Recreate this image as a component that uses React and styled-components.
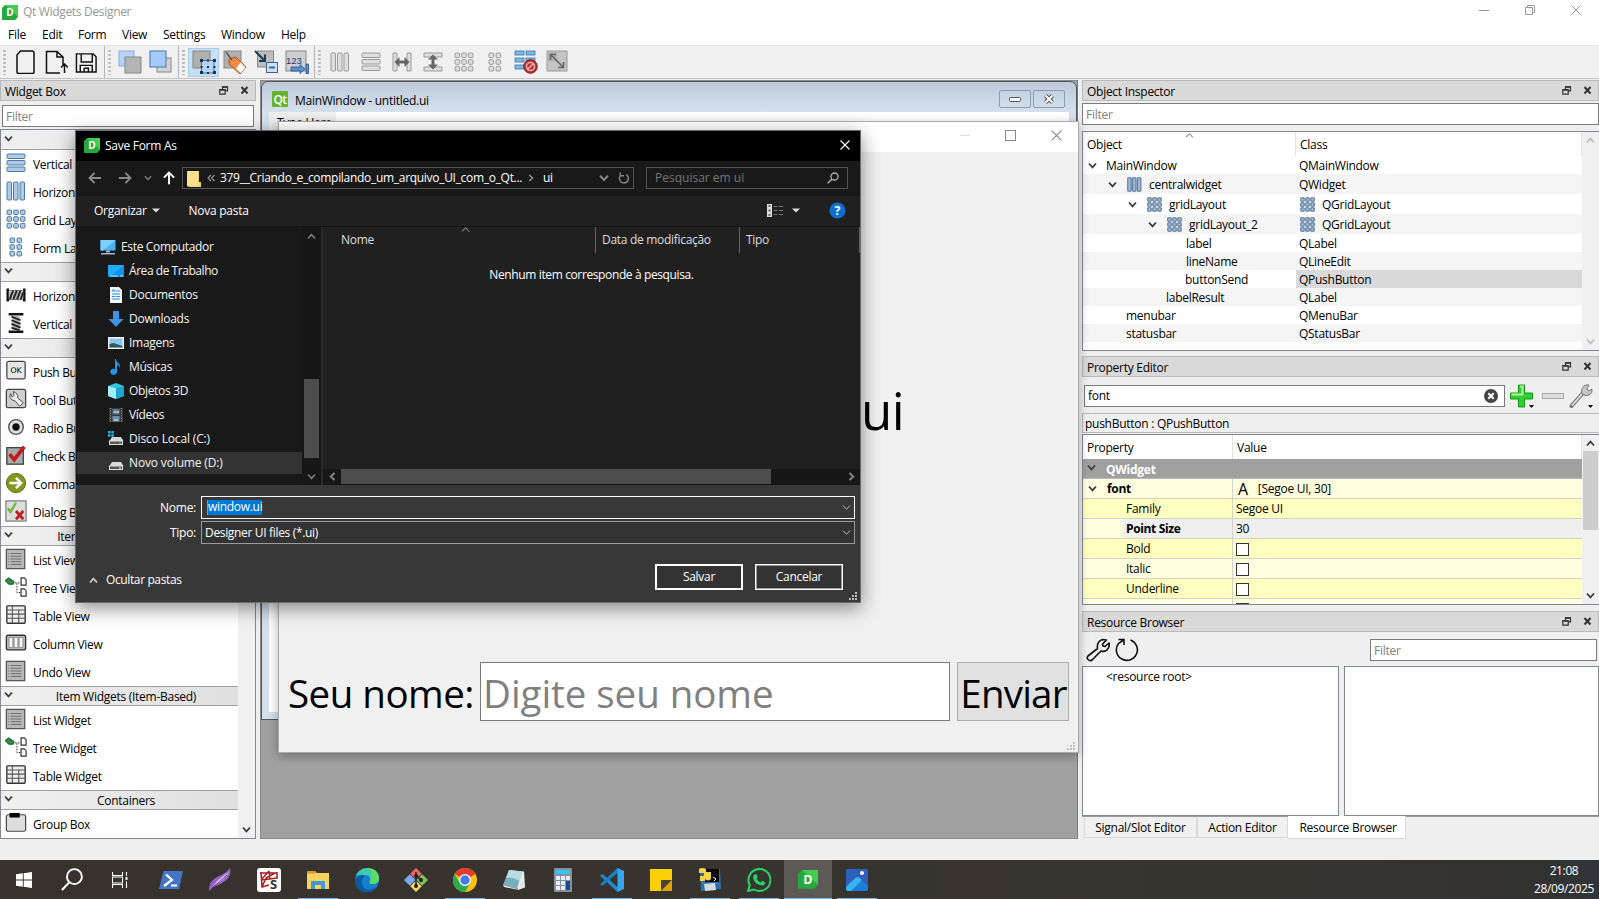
import React from 'react';
import styled, { createGlobalStyle, css } from 'styled-components';

const Global = createGlobalStyle`
  * { box-sizing: border-box; }
  html, body { margin: 0; padding: 0; overflow: hidden; }
  body { font-family: "Open Sans", "Noto Sans", sans-serif; font-size: 12px; letter-spacing: -0.27px; color: #000; }
  svg { display: block; flex: none; }
`;

/* ---------- shell ---------- */
const Screen = styled.div`
  position: relative; width: 1599px; height: 899px; overflow: hidden;
  display: flex; flex-direction: column; background: #efeff0; white-space: nowrap;
`;
const TitleBar = styled.div`
  display: flex; align-items: center; height: 24px; flex: none; background: #fff; padding-left: 2px; color: #969696;
`;
const TitleText = styled.span`flex: 1; margin-left: 5px; padding-bottom: 1px; letter-spacing: -0.32px;`;
const CaptionButton = styled.div`
  width: 46px; height: 24px; display: flex; justify-content: center; padding: 5px 1px 0 0;
`;
const MenuBar = styled.div`
  display: flex; align-items: center; height: 21px; flex: none; background: #fff; padding-left: 8px;
`;
const MenuItem = styled.span`width: ${p => p.$w}px;`;
const ToolBar = styled.div`
  display: flex; height: 34px; flex: none; border-top: 1px solid #e2e2e2; border-bottom: 1px solid #c3c3c3; background: #f0f0f0;
`;
const ToolGroup = styled.div`
  display: flex; align-items: center; padding-right: 2px; border-right: ${p => (p.$last ? 'none' : '1px solid #b5b5b5')};
`;
const Grip = styled.div`
  width: 9px; height: 26px; flex: none;
  background: radial-gradient(circle at 4.5px 2px, #b4b4b4 1px, transparent 1.4px) 0 0 / 9px 4px;
`;
const ToolButton = styled.div`
  width: 31px; height: 29px; display: flex; align-items: center; justify-content: center;
  ${p => p.$on && css`background: #c5dff3; border: 1px solid #a5cdea;`}
`;
const Work = styled.div`display: flex; height: 760px; flex: none;`;
const Status = styled.div`flex: 1;`;

/* ---------- docks ---------- */
const LeftDock = styled.div`width: 256px; padding-top: 1px; display: flex; flex-direction: column; flex: none;`;
const RightDock = styled.div`flex: 1; padding-top: 1px; display: flex; flex-direction: column;`;
const DockTitle = styled.div`
  height: 21px; flex: none; display: flex; align-items: center; padding: 1px 6px 0 4px; margin-top: ${p => p.$mt || 0}px;
  border: 1px solid #b9b9b9; background: #d9d9d9;
  span { flex: 1; padding-top: 1px; }
`;
const Field = styled.div`
  height: 22px; flex: none; background: #fff; border: 1px solid #7a7a7a; padding: 0 3px; display: flex; align-items: center;
  color: ${p => (p.$value ? '#000' : '#7f7f7f')}; margin: ${p => p.$m || 0}; width: ${p => p.$w || 'auto'};
`;
const BoxFrame = styled.div`
  margin-top: 2px; height: 710px; border: 1px solid #828790; display: flex; background: #fff;
`;
const BoxList = styled.div`width: 237px; display: flex; flex-direction: column;`;
const Category = styled.div`
  height: 20px; flex: none; display: flex; align-items: center; padding-left: 3px;
  border-top: 1px solid ${p => (p.$first ? '#f0f0f0' : '#a0a0a0')}; border-bottom: 1px solid #a0a0a0;
  background: linear-gradient(90deg, #f0f0f0, #dfdfdf);
  span { flex: 1; text-align: center; padding: 1px 0 0 1px; }
  svg { margin-bottom: 3px; }
`;
const WidgetRow = styled.div`
  height: 28px; flex: none; display: flex; align-items: center; padding-left: 4px;
  span { margin-left: 6px; letter-spacing: -0.32px; }
`;
const VScroll = styled.div`
  width: 17px; background: #f0f0f0; display: flex; flex-direction: column; align-items: center; padding: 4px 0; flex: none;
`;
const Thumb = styled.div`width: 15px; height: ${p => p.$h}px; background: #cdcdcd; margin-top: 3px;`;
const Spacer = styled.div`flex: 1;`;

/* ---------- MDI area ---------- */
const Mdi = styled.div`width: 818px; margin: 1px 4px 0 4px; background: #a0a0a0; position: relative; border: 1px solid #8b8b8b; border-right-color: #777; flex: none;`;
const SubWindow = styled.div`
  position: absolute; left: 0; top: 0; width: 816px; height: 639px; border: 1px solid #51565e; border-radius: 7px 7px 0 0;
  background: linear-gradient(#bccad9, #d5e0ec 30px, #d3dfec); padding: 0 7px 7px 7px; display: flex; flex-direction: column;
`;
const SubTitle = styled.div`
  height: 30px; flex: none; display: flex; align-items: flex-start; padding: 9px 4px 0 3px;
  span { flex: 1; margin-left: 7px; padding-top: 1px; }
`;
const SubButton = styled.div`
  width: 32px; height: 18px; margin: -1px 0 0 2px; border: 1px solid #8a9bb4; border-radius: 2px; display: flex; align-items: center; justify-content: center;
`;
const SubBody = styled.div`flex: 1; background: #fff; div { width: 67px; background: #efefef; padding: 0 8px; line-height: 21px; height: 19px; }`;
const Preview = styled.div`
  position: absolute; left: 278px; top: 121px; width: 801px; height: 632px; background: #f0f0f0;
  border: 1px solid #aaa; box-shadow: 0 3px 10px rgba(0,0,0,.3); display: flex; flex-direction: column;
`;
const PreviewTitle = styled.div`
  height: 30px; flex: none; background: #fff; display: flex; justify-content: flex-end; padding: 8px 16px 0 10px; gap: 35px;
`;
const PreviewBody = styled.div`flex: 1; display: flex; flex-direction: column; padding: 0 9px;`;
const ResultLabel = styled.div`height: 510px; flex: none; display: flex; align-items: center; font-size: 51px; letter-spacing: -0.6px; padding: 6px 0 0 573px;`;
const FormRow = styled.div`
  height: 59px; flex: none; display: flex; font-size: 38.5px; letter-spacing: -0.5px; line-height: 62px;
`;
const NameLabel = styled.div`width: 192px;`;
const NameInput = styled.div`width: 470px; border: 1px solid #7a7a7a; background: #fff; color: #808080; padding-left: 2px; margin-right: 7px; line-height: 60px; letter-spacing: -0.05px;`;
const SendButton = styled.div`width: 112px; border: 1px solid #adadad; background: #e1e1e1; text-align: center; line-height: 60px; overflow: hidden; letter-spacing: -0.8px; padding-left: 1px;`;
const Corner = styled.div`display: flex; justify-content: flex-end; margin: auto -6px 2px 0;`;

/* ---------- tables ---------- */
const TreeFrame = styled.div`
  height: ${p => p.$h}px; flex: none; margin-top: ${p => p.$mt}px; border: 1px solid #828790; border-right: none; background: #fff; display: flex; overflow: hidden;
`;
const TreeMain = styled.div`width: 499px; display: flex; flex-direction: column;`;
const TreeHead = styled.div`height: 24px; flex: none; display: flex; position: relative;`;
const TreeHeadCell = styled.div`
  width: ${p => p.$w}px; display: flex; align-items: center; padding: 1px 0 0 4px; border-right: 1px solid #e2e2e2;
`;
const SortMark = styled.i`position: absolute; left: 102px; top: -1px;`;
const TreeRow = styled.div`
  height: ${p => p.$h}px; flex: none; display: flex; background: ${p => (p.$alt ? '#f5f5f5' : '#fff')};
`;
const TreeName = styled.div`
  width: 213px; flex: none; display: flex; align-items: center; padding-left: ${p => p.$in}px;
  span { margin-left: ${p => p.$gap}px; }
  svg + svg { margin-left: 10px; }
`;
const TreeClass = styled.div`
  flex: 1; display: flex; align-items: center; padding-left: 3px; background: ${p => (p.$sel ? '#d9d9d9' : 'transparent')};
  svg { margin: 0 7px 0 1px; }
`;
const PropRow = styled.div`
  height: 20px; flex: none; display: flex; border-bottom: 1px solid #d2d2c8; background: ${p => p.$bg};
`;
const PropName = styled.div`
  width: 150px; flex: none; border-right: 1px solid #d2d2c8; display: flex; align-items: center; padding-left: ${p => p.$in}px;
  font-weight: ${p => (p.$bold ? 700 : 400)}; letter-spacing: ${p => (p.$bold ? '-0.35px' : 'inherit')};
  background: ${p => (p.$sel ? 'linear-gradient(90deg, #ffffdf 40px, transparent 40px)' : 'transparent')};
  svg { margin-right: 10px; }
`;
const PropValue = styled.div`
  flex: 1; display: flex; align-items: center; padding-left: 3px;
  b { font: 16px/16px "Open Sans"; margin: 0 10px 0 2px; }
`;
const GroupRow = styled.div`
  height: 20px; flex: none; background: #a0a0a0; color: #fff; font-weight: 700; display: flex; align-items: center; padding: 1px 0 0 4px; border-bottom: 1px solid #bbb;
  svg { margin: 0 10px 3px 0; }
`;
const CheckBox = styled.div`width: 13px; height: 13px; border: 1px solid #333; background: #fff; margin-top: 1px;`;
const PropTools = styled.div`height: 36px; flex: none; display: flex; align-items: center; padding: 1px 6px 0 2px; justify-content: space-between;`;
const ObjectLine = styled.div`height: 20px; flex: none; border: 1px solid #b9b9b9; border-right: none; display: flex; align-items: center; padding: 1px 0 0 2px;`;
const ResTools = styled.div`height: 34px; flex: none; display: flex; align-items: center; padding: 2px 2px 0 4px; gap: 5px;`;
const ResPanes = styled.div`height: 150px; flex: none; display: flex; gap: 5px;`;
const ResPane = styled.div`flex: ${p => (p.$w ? 'none' : 1)}; width: ${p => p.$w || 'auto'}; border: 1px solid #828790; background: #fff; padding: 1px 0 0 23px;`;
const Tabs = styled.div`display: flex; padding-left: 2px; height: 23px; flex: none; border-top: 1px solid #9a9aa0;`;
const Tab = styled.div`
  width: ${p => p.$w}px; height: ${p => (p.$on ? 23 : 21)}px; display: flex; align-items: center; justify-content: center; padding-left: ${p => (p.$on ? 3 : 0)}px;
  background: ${p => (p.$on ? '#fff' : '#f0f0f0')}; border: 1px solid #d9d9d9; border-top: none; border-left-width: ${p => (p.$on ? 0 : 1)}px; margin-top: ${p => (p.$on ? -1 : 0)}px;
`;

/* ---------- save dialog ---------- */
const Dialog = styled.div`
  position: absolute; left: 75px; top: 130px; width: 786px; height: 473px; border: 1px solid #6a6a6a; background: #383838; color: #fff;
  display: flex; flex-direction: column; box-shadow: 0 5px 18px rgba(0,0,0,.45);
`;
const DlgTitle = styled.div`height: 30px; flex: none; background: #000; display: flex; align-items: center; padding: 0 10px 2px 8px; span { flex: 1; margin-left: 5px; }`;
const DlgNav = styled.div`height: 35px; flex: none; background: #191919; display: flex; align-items: center; padding: 0 0 1px 12px;`;
const NavIcon = styled.div`width: ${p => p.$w}px; flex: none; display: flex;`;
const Address = styled.div`
  width: 452px; height: 22px; border: 1px solid #535353; display: flex; align-items: center; padding-left: 4px; flex: none;
`;
const Crumb = styled.span`width: ${p => p.$w}px; color: ${p => (p.$dim ? '#9a9a9a' : '#fff')}; letter-spacing: ${p => p.$ls || 'inherit'}; flex: none; padding-bottom: 1px;`;
const Search = styled.div`
  width: 202px; height: 22px; margin-left: 12px; border: 1px solid #535353; display: flex; align-items: center; justify-content: space-between; padding: 0 8px 1px; color: #757575; letter-spacing: 0;
`;
const DlgTools = styled.div`
  height: 31px; flex: none; background: #202020; border-bottom: 1px solid #141414; display: flex; align-items: center; padding: 0 14px 1px 18px;
`;
const MenuMark = styled.i`margin: 0 ${p => p.$r}px 0 ${p => p.$l}px;`;
const DlgBody = styled.div`height: 258px; flex: none; display: flex;`;
const NavPane = styled.div`width: 226px; background: #191919; padding-top: 8px;`;
const NavRow = styled.div`
  height: 24px; display: flex; align-items: center; padding-left: ${p => (p.$root ? 24 : 32)}px; color: #f4f4f4;
  background: ${p => (p.$sel ? 'linear-gradient(#333, #333) 1px 1px / 100% 22px no-repeat' : 'none')};
  letter-spacing: ${p => p.$ls || -0.27}px;
  span { margin-left: 5px; padding-bottom: 2px; }
`;
const NavScroll = styled.div`
  width: 19px; background: #171717; display: flex; flex-direction: column; align-items: center; padding: 5px 0 4px;
  i { width: 15px; height: 79px; background: #4d4d4d; margin: auto 0 14px; }
`;
const Files = styled.div`flex: 1; background: #202020; border-left: 2px solid #2b2b2b; display: flex; flex-direction: column;`;
const FileHead = styled.div`
  height: 26px; flex: none; display: flex; position: relative; color: #dedede;
  svg { position: absolute; left: 138px; top: -2px; }
`;
const HeadCell = styled.div`width: ${p => p.$w}px; border-right: 1px solid #636363; padding: 4px 0 0 ${p => p.$l}px; letter-spacing: -0.3px;`;
const Empty = styled.div`flex: 1; text-align: center; padding-top: 13px; letter-spacing: -0.38px;`;
const HScroll = styled.div`
  height: 16px; background: #171717; display: flex; align-items: center; padding: 0 4px 1px 5px;
  i { width: 430px; height: 15px; background: #4d4d4d; margin: 0 auto 0 4px; }
`;
const DlgForm = styled.div`padding: 11px 5px 0 0; display: flex; flex-direction: column; gap: 2px;`;
const FormLine = styled.div`display: flex; align-items: center; height: 23px; label { width: 120px; text-align: right; margin-right: 5px; }`;
const Combo = styled.div`
  flex: 1; height: 23px; display: flex; align-items: center; justify-content: space-between; background: ${p => (p.$focus ? '#383838' : '#333')};
  border: 1px solid ${p => (p.$focus ? '#fff' : '#9b9b9b')}; padding: 0 3px ${p => (p.$focus ? 1 : 0)}px ${p => (p.$focus ? 5 : 3)}px; letter-spacing: -0.33px;
`;
const Selected = styled.span`background: #0078d7; border-left: 1px solid #e08030; line-height: 14px; height: 15px; letter-spacing: -0.3px;`;
const DlgFoot = styled.div`
  display: flex; align-items: center; height: 26px; margin-top: 20px; padding: 0 17px 0 13px;
  span { flex: 1; margin-left: 8px; padding-top: 4px; letter-spacing: -0.38px; }
  > svg { margin-top: 6px; }
`;
const DlgButton = styled.div`
  width: 88px; height: 26px; margin-left: 12px; border: ${p => (p.$main ? '2px solid #fff' : '1px solid #fff')};
  box-shadow: ${p => (p.$main ? 'none' : 'inset 0 0 0 1px #9b9b9b')}; background: #333; display: flex; align-items: center; justify-content: center; padding-bottom: 2px;
`;
const DlgCorner = styled.div`display: flex; justify-content: flex-end; padding: 2px 3px 0 0;`;

/* ---------- taskbar ---------- */
const TaskBar = styled.div`height: 39px; flex: none; display: flex; background: linear-gradient(90deg, #37322d, #38342f 70%, #32322f 96%, #30343a);`;
const Task = styled.div`
  width: ${p => p.$w || 49}px; height: 39px; display: flex; align-items: center; justify-content: center; position: relative; flex: none; padding-right: ${p => p.$pr || 0}px;
  background: ${p => (p.$active ? 'linear-gradient(90deg, #5d5955, #5d5955) 1px 0 / 48px 39px no-repeat' : 'none')};
  ${p => (p.$run || p.$active) && css`&::after { content: ''; position: absolute; left: ${p.$active ? 1 : 5}px; right: ${p.$active ? 0 : 4}px; bottom: 0; height: 1px; background: #76b9ed; }`}
`;
const Clock = styled.div`margin-left: auto; width: 70px; color: #fff; text-align: center; line-height: 18px; padding-top: 2px; letter-spacing: -0.38px;`;

/* ---------- icons ---------- */
const Designer = ({ s = 16 }) => (
  <svg width={s} height={s * 15 / 16} viewBox="0 0 16 15">
    <path d="M3 0H16V12L13 15H0V3Z" fill="#27a83c" /><path d="M3 0H16V12L9 5Z" fill="#41cd52" />
    <text x="8" y="11.3" textAnchor="middle" fontSize="10" fontWeight="700" letterSpacing="0" fill="#fff" fontFamily="Open Sans">D</text>
  </svg>
);
const QtIcon = () => (
  <svg width="16" height="16" viewBox="0 0 16 16"><rect width="16" height="16" rx="1" fill="#65b32e" />
    <text x="8" y="12.5" textAnchor="middle" fontSize="12" fontWeight="600" letterSpacing="-.5" fill="#fff" fontFamily="Open Sans">Qt</text></svg>
);
const X = ({ s = 10, c = '#999', w = 1 }) => <svg width={s} height={s} viewBox="0 0 10 10"><path d="M.5.5l9 9M9.5.5l-9 9" stroke={c} strokeWidth={w} fill="none" /></svg>;
const Chev = ({ d = 'down', c = '#3c3c3c', s = 9, w = 1.8 }) => {
  const r = { down: 0, left: 90, up: 180, right: 270 }[d];
  return <svg width={s} height={s} viewBox="0 0 9 9"><path d="M1 2.5l3.5 3.8L8 2.5" transform={`rotate(${r} 4.5 4.5)`} stroke={c} strokeWidth={w} fill="none" /></svg>;
};
const Tri = ({ c = '#ddd' }) => <svg width="8" height="5" viewBox="0 0 8 5"><path d="M0 .5h8L4 4.5z" fill={c} /></svg>;
const DockIcons = () => (
  <svg width="30" height="10" viewBox="0 0 30 10"><path d="M3.5 3V.8h5v4H6.5M.8 3.8h5.4v4.4H.8z" stroke="#333" fill="none" strokeWidth="1.2" /><path d="M.5 3.8h6M3 .9h6" stroke="#333" strokeWidth="1.5" /><path d="M22.500 1l6 6.5M28.500 1l-6 6.5" stroke="#333" strokeWidth="2" /></svg>
);
const SizeGrip = ({ c }) => <svg width="8" height="8" viewBox="0 0 8 8" fill={c}><path d="M6 0h2v2H6zM3 3h2v2H3zM6 3h2v2H6zM0 6h2v2H0zM3 6h2v2H3zM6 6h2v2H6z" /></svg>;

const cells = (xs, ys, w, h, k) => xs.flatMap(x => ys.map(y => <rect key={`${k}${x}-${y}`} x={x} y={y} width={w} height={h} rx="1" />));
const LayoutIcon = ({ kind, gray, s = 20, dim }) => (
  <svg width={s} height={s} viewBox="0 0 20 20" fill={gray ? '#dedede' : dim ? '#a3bdd8' : '#a9cdea'} stroke={gray ? '#9a9a9a' : dim ? '#5a7899' : '#56789c'} strokeWidth={dim ? 1.5 : 1}>
    {kind === 'v' && cells([1], [1, 7.5, 14], 18, 4.5, 'v')}
    {kind === 'h' && cells([1, 7.5, 14], [1], 4.5, 18, 'h')}
    {kind === 'g' && cells([1, 7.7, 14.4], [1, 7.7, 14.4], 4.6, 4.6, 'g')}
    {kind === 'f' && cells([4, 11], [1, 7.7, 14.4], 4.6, 4.6, 'f')}
  </svg>
);
const SplitIcon = ({ v }) => (
  <svg width="20" height="20" viewBox="0 0 20 20"><g transform={v ? 'rotate(90 10 10)' : ''}>
    <path d="M1 1h4v18H1zM15 1h4v18h-4z" fill="#dedede" stroke="#9a9a9a" /><path d="M2.500 10L7.500 5v3.500h5V5l5 5-5 5v-3.500h-5V15z" fill="#666" /></g></svg>
);
const Sq = ({ x, y, s = 16, c = '#b5b5b5', b = '#888' }) => <rect x={x} y={y} width={s} height={s} fill={c} stroke={b} />;
const Svg = ({ s = 24, children }) => <svg width={s} height={s} viewBox="0 0 24 24" fill="none">{children}</svg>;

const I = {
  new: <Svg><path d="M7.500 1H19q2 0 2 2v19q0 1.500-1.500 1.500h-14Q4 23.500 4 22V5z" stroke="#111" strokeWidth="1.500" /></Svg>,
  open: <Svg><path d="M16 23H2.500V1.500H13L19 7v8M13 1.500V7h5.500M20.500 23v-9M17 17.500l3.500-3.500 3.500 3.500" stroke="#111" strokeWidth="1.500" /></Svg>,
  save: <Svg s={23}><path d="M1.500 3h17.500l3 3v16H1.500zM6.500 3v8.500h11.500V3M5.500 22v-7H18v7M9.500 18h4.500v4M9.500 18v4" stroke="#111" strokeWidth="1.500" /></Svg>,
  back: <Svg><rect x="1" y="1" width="15" height="15" fill="#b8d2f5" stroke="#8ea9cf" /><Sq x="7" y="7" c="#b4b4b4" /></Svg>,
  front: <Svg><Sq x="8" y="8" s={14} c="#d3d3d3" /><rect x="1" y="1" width="16" height="16" fill="#a5cbfa" stroke="#4d6fa3" /></Svg>,
  edit: <Svg><Sq x="1" y="1" s={17} c="#b0b0b0" /><rect x="9.500" y="10.500" width="12.500" height="12.500" fill="#b5d3f8" stroke="#2f4f7d" strokeWidth=".8" /><path d="M8 9h3v3H8zM21 9h3v3h-3zM8 21h3v3H8zM21 21h3v3h-3zM15 9.500h2v2h-2zM8.500 16h2v2h-2zM21.500 16h2v2h-2zM15 22h2v2h-2zM15 16h2v2h-2z" fill="#1f3350" /></Svg>,
  tag: <Svg><Sq x="1" y="1" s={17} c="#b0b0b0" /><path d="M6 9l7-2 10 10-6 7L6 14z" fill="#ef8a42" stroke="#b5561d" /><path d="M17.500 12.500l5 5-5 5.500-4.500-4.500z" fill="#fff" /><path d="M3 2l6 8" stroke="#555" strokeWidth="1.300" /></Svg>,
  buddy: <Svg><Sq x="3.500" y="1" s={16} c="#bcbcbc" /><rect x="12.500" y="12.500" width="11" height="10" fill="#cfe2fb" stroke="#3e6196" /><path d="M15 17.500h6" stroke="#3e6196" strokeWidth="2" /><path d="M1 1l9 9M11 4.500V11H5" stroke="#1b3c55" strokeWidth="2" /></Svg>,
  taborder: <Svg><Sq x="1" y="1" s={20} c="#cfcfcf" /><text x="1" y="14" fontSize="9.500" fontFamily="Liberation Sans" fill="#123a78" letterSpacing="0">123</text><path d="M6 17h9v-2.500l5 4.500-5 4.500V21H6zM21 14h2.500v10H21z" fill="#5d8fd0" stroke="#234f8f" strokeWidth=".8" /></Svg>,
  breakl: <Svg><g fill="#79b7e6" stroke="#3f77a8" strokeWidth=".8"><rect x="1" y="1" width="9" height="4" /><rect x="12" y="1" width="9" height="4" /><rect x="1" y="8" width="9" height="4" /><rect x="12" y="8" width="9" height="4" /><rect x="1" y="15" width="9" height="4" /></g><circle cx="16.500" cy="16.500" r="6.800" fill="#c02b2b" stroke="#8b1c1c" /><path d="M12.500 16.500a4 4 0 018 0a4 4 0 01-8 0M19.500 13.500l-6 6" stroke="#ddb0b0" strokeWidth="1.600" /></Svg>,
  adjust: <Svg><Sq x="2" y="1" s={20} c="#c4c4c4" b="#999" /><rect x="2.500" y="1.500" width="10" height="10" fill="#b4b4b4" /><path d="M6 5l12 12M5.500 10V4.500H11M18.500 12v5.500H13" stroke="#666" strokeWidth="1.700" /></Svg>,
  spacerH: <Svg s={22}><path d="M3 5v14M21 5v14" stroke="#111" strokeWidth="2.800" /><path d="M4 8h16v8H4z" fill="#b5b5b5" /><path d="M5 17l4-10M9 17l4-10M13 17l4-10M17 17l3-8" stroke="#222" strokeWidth="2" /><path d="M5 7h14M5 17h14" stroke="#555" /></Svg>,
  spacerV: <Svg s={22}><path d="M4 2.500h16M4 21.500h16" stroke="#111" strokeWidth="2.800" /><path d="M8 4h8v16H8z" fill="#b5b5b5" /><path d="M7 5l10 4M7 9l10 4M7 13l10 4M7 17l9 3" stroke="#222" strokeWidth="2" /></Svg>,
  push: <Svg s={22}><rect x="2" y="1.500" width="20" height="19" rx="2" fill="#e7e7e7" stroke="#444" strokeWidth="1.400" /><text x="12" y="14" fontSize="8.500" textAnchor="middle" letterSpacing="0" fontFamily="DejaVu Sans" fill="#000">OK</text></Svg>,
  tool: <Svg s={22}><rect x="1.500" y="1.500" width="21" height="20" rx="2" fill="#cfcfcf" stroke="#444" strokeWidth="1.400" /><path d="M6 6q-2 5 2 7l3 1 5 6 4-4-6-5q0-6-5-7l1 4-2 2z" fill="#eee" stroke="#444" /></Svg>,
  radio: <Svg s={22}><circle cx="12" cy="12" r="8" fill="#ddd" stroke="#555" strokeWidth="1.500" /><circle cx="12" cy="12" r="4" fill="#111" /></Svg>,
  check: <Svg s={22}><rect x="2" y="4" width="18" height="18" fill="#aaa" stroke="#444" strokeWidth="1.500" /><path d="M5 11l5 6L21 3" stroke="#c01c1c" strokeWidth="4" /></Svg>,
  command: <Svg s={22}><circle cx="12" cy="12" r="10.500" fill="#7f9a1e" stroke="#54690c" /><path d="M5 12h12M12 6.500l5.500 5.500-5.500 5.500" stroke="#fff" strokeWidth="2.800" /></Svg>,
  dialogbox: <Svg s={22}><rect x="1" y="1" width="22" height="22" fill="#ddd" stroke="#555" /><path d="M3 9l3 4 6-10" stroke="#6fba32" strokeWidth="2.600" /><path d="M12 12l8 9M20 12l-8 9" stroke="#bf2020" strokeWidth="3" /></Svg>,
  list: <Svg s={22}><rect x="1.500" y="1.500" width="20" height="21" fill="#b9b9b9" stroke="#555" strokeWidth="1.400" /><path d="M6 6h12M6 9h12M6 12h12M6 15h12M6 18h12M3.500 6h1M3.500 9h1M3.500 12h1M3.500 15h1M3.500 18h1" stroke="#666" /></Svg>,
  tree: <Svg s={22}><path d="M0 5l4-3 6 4-1 3-5 0z" fill="#2f8f46" stroke="#174d24" /><path d="M11 7.500h5M13 8v10h4" stroke="#111" strokeDasharray="1.500 1.500" /><path d="M17.500 2H21l2 2v6h-5.500zM17.500 14H21l2 2v6h-5.500z" fill="#fff" stroke="#333" strokeWidth="1.300" /></Svg>,
  table: <Svg s={22}><rect x="2" y="2" width="20" height="19" rx="1" fill="#eee" stroke="#333" strokeWidth="1.500" /><path d="M2 6.500h20M2 11h20M2 15.500h20M8 2v19M15 6v15" stroke="#555" strokeWidth="1.200" /></Svg>,
  column: <Svg s={22}><rect x="1.500" y="3.500" width="21" height="16" rx="2" fill="#bbb" stroke="#333" strokeWidth="1.500" /><path d="M4.500 6h4v11h-4zM10 6h4v11h-4zM15.500 6h4v11h-4z" fill="#fff" stroke="#777" strokeWidth=".8" /></Svg>,
  group: <Svg s={22}><rect x="1.500" y="3" width="21" height="18" rx="2" fill="#ddd" stroke="#444" strokeWidth="1.300" /><rect x="5" y="1" width="11" height="5" fill="#000" /></Svg>,
};

const N = ({ children, s = 16 }) => <svg width={s} height={s} viewBox="0 0 16 16" fill="none">{children}</svg>;
const NavI = {
  pc: <N><rect x=".5" y="1" width="15" height="10.500" fill="#4db3f4" /><path d="M.5 1h15L3 11.500H.500z" fill="#7bd0fb" /><path d="M6 11.500h4v2H6zM1 14h14v1.500H1z" fill="#9fb6c6" /></N>,
  desk: <N><rect x="0" y="2" width="16" height="12" fill="#0c93f0" /><path d="M0 2h16L4 12H0z" fill="#22a9ff" /><path d="M2 13h8M12 13h3" stroke="#bfe6ff" /></N>,
  doc: <N><path d="M2 0h9l3 3v13H2z" fill="#f2f5f7" /><path d="M4 5l1.500-3L7 5M8 4h4M4 7h8M4 9.500h3M8 9.500h4M4 12h8" stroke="#2f8fd0" /></N>,
  down: <N><path d="M5 0h6v8h4.500L8 16 .5 8H5z" fill="#3d93e2" /></N>,
  img: <N><rect y="2" width="16" height="12" fill="#f1f4f6" /><rect x="1.500" y="3.500" width="13" height="9" fill="#8cc6ec" /><path d="M1.500 9l4-1 9 3v1.500h-13z" fill="#2e5a5c" /></N>,
  music: <N><path d="M8 0c0 4 5 4 4 9-.6-2-2-3-3-3v7a3.400 3 0 11-2-3V0z" fill="#1c96ef" /></N>,
  cube: <N><path d="M8 0l8 3v10l-8 3-8-3V3z" fill="#35c4de" /><path d="M0 3l8 2.500V16l-8-3z" fill="#a2edf4" /><path d="M16 3L8 5.500V16l8-3z" fill="#1ba5cf" /></N>,
  video: <N><rect x="1" y="1" width="14" height="14" fill="#3a3a3a" /><path d="M2.500 1v14M13.500 1v14" stroke="#999" strokeDasharray="1 1.500" /><rect x="4.500" y="2" width="7" height="5.500" fill="#3b78c9" /><rect x="4.500" y="9" width="7" height="5.500" fill="#5f93c9" /><path d="M5 6l2-3 2 3zM8 4h3v2H8zM6 12h4v2H6z" fill="#e0b84a" /></N>,
  diskc: <N><path d="M0 0h2.500v2.500H0zM3.300 0h2.500v2.500H3.300zM0 3.300h2.500v2.500H0zM3.300 3.300h2.500v2.500H3.300z" fill="#1fb2e8" /><path d="M4 6h9l2.500 4H1.500z" fill="#d8d8d8" /><rect x="1.500" y="10" width="13" height="3.500" fill="#555" stroke="#ddd" /><path d="M11 12h2" stroke="#3fdc4f" /></N>,
  diskd: <N><path d="M4 7h9l2.500 4H1.500z" fill="#d8d8d8" /><rect x="1.500" y="11" width="13" height="3.500" fill="#555" stroke="#ddd" /><path d="M11 13h2" stroke="#eee" /></N>,
};
const Arrow = ({ d, c }) => <N s={14}><path transform={d === 'right' ? 'rotate(180 8 8)' : d === 'up' ? 'rotate(90 8 8)' : ''} d="M15 8H2M7.500 2.200L1.800 8l5.700 5.800" stroke={c} strokeWidth="2.200" /></N>;

const T = {
  win: <N><path d="M0 2.300L6.800 1.300V7.600H0zM7.700 1.200L16 0V7.600H7.700zM0 8.500H6.800V14.700L0 13.700zM7.700 8.500H16V16L7.700 14.800z" fill="#fff" /></N>,
  search: <Svg s={23}><circle cx="14" cy="9" r="7.800" stroke="#fff" strokeWidth="2" /><path d="M8.500 15L1 23" stroke="#fff" strokeWidth="2.200" /></Svg>,
  view: <N><path d="M.5 0v3.500h10V0M.5 16v-3.500h10V16M.5 5h10v6H.500zM14.500 0v4M14.500 9.500V16" stroke="#fff" strokeWidth="1.100" /><path d="M13.500 5h2v3h-2z" fill="#fff" /></N>,
  ps: <Svg><path d="M4.500 3H24l-4 18H0z" fill="#4275c4" /><path d="M7 6.500l6 5.500-8 6M12 17.500h6" stroke="#fff" strokeWidth="2.200" /></Svg>,
  feather: <Svg><path d="M1 23Q0 14 9 9 17 6 22 0q2 8-5 13-7 5-12 6z" fill="#9461c4" /><path d="M2 22Q8 12 21 4q-4 9-15 13z" fill="#d9bdf0" /><path d="M1 23L19 7" stroke="#6d3ca0" /></Svg>,
  spyder: <Svg><rect width="24" height="24" rx="3" fill="#fff" /><path d="M3 5h17M4 4l1 15 7-2M12 3l-8 9M12 3l1 8 7-1V4M5 19l4-9 9-5M4 12l9-1" stroke="#a61e22" strokeWidth="1.500" /><text x="13" y="21" fontSize="13" fontWeight="700" letterSpacing="0" fontFamily="Open Sans" fill="#333">S</text></Svg>,
  folder: <Svg><path d="M1 3h8l2 2h12v16H1z" fill="#fbd25f" /><path d="M1 3h8l1.500 2.500H1z" fill="#dd9b1d" /><path d="M5 21v-8h14v8h-4v-4H9v4z" fill="#3d9bdc" /></Svg>,
  edge: <Svg><circle cx="12" cy="12" r="12" fill="#1680cf" /><path d="M1 8Q4 0 12 0q11 0 12 10 0 6-7 6-4 0-2-3 1-6-5-6-6-1-9 1z" fill="#3cc9b0" /><path d="M12 0q11 0 12 10 0 6-7 6-3 0-2-3Q20 6 12 0z" fill="#5ddb66" /><path d="M10 8q-6 5-1 12 5 4 12-1-4 6-11 5Q0 22 0 12q3-6 10-4z" fill="#0c59a4" /></Svg>,
  git: <Svg><path d="M12 0l5.700 5.700L12 11.400 6.300 5.700z" fill="#f1665f" /><path d="M5.800 6.300l5.700 5.700-5.700 5.700L0 12z" fill="#79a8f5" /><path d="M18.200 6.300L24 12l-5.800 5.700-5.700-5.700z" fill="#7fc35a" /><path d="M12 12.600l5.700 5.700L12 24l-5.700-5.700z" fill="#f7d564" /><path d="M12 4v14M12 7l5 5" stroke="#333" strokeWidth="1.800" /><circle cx="12" cy="18" r="2" fill="#222" /><circle cx="17" cy="12" r="2" fill="#222" /><circle cx="12" cy="8" r="2" fill="#222" /></Svg>,
  chrome: <Svg><circle cx="12" cy="12" r="12" fill="#fbc116" /><path d="M12 12L1.600 6A12 12 0 0122.400 6z" fill="#e33b2e" /><path d="M1.600 6A12 12 0 0012 24l5.200-9L12 12 6.800 15z" fill="#2da94f" /><circle cx="12" cy="12" r="6" fill="#fff" /><circle cx="12" cy="12" r="4.700" fill="#3f7ee8" /></Svg>,
  note: <Svg><path d="M8 2l14 1.500 1 16-7 2.500z" fill="#e5ebe8" /><path d="M7 2l13 2-5 17L1 17z" fill="#76aebd" /><path d="M7 2l13 2-2.500 9Q10 8 4 10z" fill="#b9dce3" /><path d="M1 17l14 4 2 1-15-3z" fill="#eee" /></Svg>,
  calc: <Svg><rect x="3" width="18" height="24" rx="1" fill="#84909b" /><rect x="5" y="2" width="14" height="4" fill="#37c2ee" /><path d="M5 8h4v4H5zM10 8h4v4h-4zM15 8h4v4h-4zM5 13h4v4H5zM10 13h4v4h-4zM5 18h4v4H5zM10 18h4v4h-4z" fill="#e8edf0" /><path d="M15 13h4v9h-4z" fill="#1e4a94" /></Svg>,
  code: <Svg><path d="M2.500 6L0 7.800 17.500 24l3-2.500z" fill="#1f8ad2" /><path d="M2.500 18L0 16.200 17.500 0l3 2.500z" fill="#1b7fc4" /><path d="M17.500 0L24 3v18l-6.500 3z" fill="#37a6ee" /></Svg>,
  sticky: <Svg><path d="M1 1h22v22H1z" fill="#fbd008" /><path d="M23 12v11H12z" fill="#e0a500" /><path d="M12 12h11L12 23z" fill="#484336" /></Svg>,
  idle: <Svg><path d="M2 2l20-1 1 20-20 2z" fill="#2f6fae" /><path d="M7 1h14v13H7z" fill="#090909" /><path d="M1 1q3-2 7 0v3h5v7q-3 3-6 0v2H2V8h4V5H1z" fill="#f5d341" /><path d="M6 16l11-1 1 7-11 1z" fill="#d5dadf" /><path d="M15 9l3 2-2 2" stroke="#fff" /></Svg>,
  whats: <Svg><path d="M1 23l1.700-6A11 11 0 1112.500 23q-3 0-5.500-1.500z" stroke="#25d366" strokeWidth="2" /><path d="M8 6l1.500.2 1.300 3-1.200 1.700q1.500 2.500 4 3.500l1.600-1.600 3 1.500q0 3-3 3.300Q7.500 17 6 9.500 6.500 6.500 8 6z" fill="#25d366" /></Svg>,
  photos: <Svg><rect x="1" y="1" width="22" height="22" rx="2" fill="#2d5fbd" /><path d="M1 19L11 9.500q1.500-1 3 0l9 8.500v3q0 2-2 2H3q-2 0-2-2z" fill="#1d7edb" /><path d="M1 19L11 9.500q1.500-1 3 0L17 12 6 23H3q-2 0-2-2z" fill="#37b4f2" /><circle cx="17" cy="5" r="2" fill="#fff" /></Svg>,
};

/* ---------- data ---------- */
const boxes = [
  ['', [[<LayoutIcon kind="v" />, 'Vertical Layout'], [<LayoutIcon kind="h" />, 'Horizontal Layout'], [<LayoutIcon kind="g" />, 'Grid Layout'], [<LayoutIcon kind="f" />, 'Form Layout']]],
  ['', [[I.spacerH, 'Horizontal Spacer'], [I.spacerV, 'Vertical Spacer']]],
  ['', [[I.push, 'Push Button'], [I.tool, 'Tool Button'], [I.radio, 'Radio Button'], [I.check, 'Check Box'], [I.command, 'Command Link Button'], [I.dialogbox, 'Dialog Button Box']]],
  ['Item Views (Model-Based)', [[I.list, 'List View'], [I.tree, 'Tree View'], [I.table, 'Table View'], [I.column, 'Column View'], [I.list, 'Undo View']]],
  ['Item Widgets (Item-Based)', [[I.list, 'List Widget'], [I.tree, 'Tree Widget'], [I.table, 'Table Widget']]],
  ['Containers', [[I.group, 'Group Box']]],
];
const IconSlot = styled.div`width: 22px; display: flex; justify-content: center; margin-bottom: 2px;`;

const objects = [
  [18, 5, true, null, 'MainWindow', 'QMainWindow'],
  [20, 25, true, 'h', 'centralwidget', 'QWidget'],
  [20, 45, true, 'g', 'gridLayout', 'QGridLayout', true],
  [20, 65, true, 'g', 'gridLayout_2', 'QGridLayout', true],
  [18, 103, false, null, 'label', 'QLabel'],
  [18, 103, false, null, 'lineName', 'QLineEdit'],
  [18, 102, false, null, 'buttonSend', 'QPushButton'],
  [18, 83, false, null, 'labelResult', 'QLabel'],
  [18, 43, false, null, 'menubar', 'QMenuBar'],
  [18, 43, false, null, 'statusbar', 'QStatusBar'],
];

const navRows = [['pc', 'Este Computador', -0.33], ['desk', 'Área de Trabalho', -0.45], ['doc', 'Documentos'], ['down', 'Downloads'], ['img', 'Imagens'], ['music', 'Músicas'], ['cube', 'Objetos 3D', -0.33], ['video', 'Vídeos', -0.33], ['diskc', 'Disco Local (C:)', -0.15], ['diskd', 'Novo volume (D:)', -0.15]];

const tasks = [['ps'], ['feather'], ['spyder'], ['folder', 1], ['edge'], ['git'], ['chrome', 1], ['note'], ['calc'], ['code', 1], ['sticky'], ['idle', 1], ['whats', 1], ['designer', 2], ['photos', 1]];

const Dock = ({ title, mt }) => <DockTitle $mt={mt}><span>{title}</span><DockIcons /></DockTitle>;
const ClearIcon = styled.svg`margin-right: 3px;`;

function WidgetBox() {
  return (
    <LeftDock>
      <Dock title="Widget Box" />
      <Field $m="4px 2px 0 2px">Filter</Field>
      <BoxFrame>
        <BoxList>
          {boxes.map(([name, rows], i) => (
            <React.Fragment key={i}>
              <Category $first={i === 0}><Chev /><span>{name}</span></Category>
              {rows.map(([icon, label]) => <WidgetRow key={label}><IconSlot>{icon}</IconSlot><span>{label}</span></WidgetRow>)}
            </React.Fragment>
          ))}
        </BoxList>
        <VScroll><Spacer /><Chev /></VScroll>
      </BoxFrame>
    </LeftDock>
  );
}

function Prop({ name, indent, bold, sel, bg, children }) {
  return <PropRow $bg={bg}><PropName $in={indent} $bold={bold} $sel={sel}>{name}</PropName><PropValue>{children}</PropValue></PropRow>;
}

function Inspector() {
  return (
    <RightDock>
      <Dock title="Object Inspector" />
      <Field $m="2px 0 0 0">Filter</Field>
      <TreeFrame $h={220} $mt={6}>
        <TreeMain>
          <TreeHead><TreeHeadCell $w={213}>Object</TreeHeadCell><TreeHeadCell $w={286}>Class</TreeHeadCell><SortMark><Chev d="up" c="#666" w={1} /></SortMark></TreeHead>
          {objects.map(([h, ind, open, icon, name, cls, ci], i) => (
            <TreeRow key={name} $h={h} $alt={i % 2 === 1}>
              <TreeName $in={ind} $gap={!open ? 0 : icon ? 7 : 9}>
                {open && <Chev />}{icon && <LayoutIcon kind={icon} s={15} dim />}<span>{name}</span>
              </TreeName>
              <TreeClass $sel={i === 6}>{ci && <LayoutIcon kind="g" s={15} dim />}{cls}</TreeClass>
            </TreeRow>
          ))}
        </TreeMain>
        <VScroll><Chev d="up" c="#bbb" /><Spacer /><Chev c="#bbb" /></VScroll>
      </TreeFrame>

      <Dock title="Property Editor" mt={5} />
      <PropTools>
        <Field $value $w="421px">font<Spacer />
          <ClearIcon width="14" height="14" viewBox="0 0 14 14"><circle cx="7" cy="7" r="7" fill="#444" /><path d="M4.300 4.300l5.400 5.400M9.700 4.300L4.300 9.700" stroke="#fff" strokeWidth="2" /></ClearIcon>
        </Field>
        <svg width="26" height="24" viewBox="0 0 26 24"><path d="M8.500 1h6v8h8v6h-8v8h-6v-8h-8V9h8z" fill="#2fd02f" stroke="#149a14" /><path d="M10 2.500h2.500v8h-11" stroke="#b5f5a5" strokeWidth="2" fill="none" /><path d="M19 21h5l-2.500 3z" fill="#000" /></svg>
        <svg width="22" height="24" viewBox="0 0 22 24"><rect x=".5" y="9.500" width="21" height="5" fill="#ddd" stroke="#a8a8a8" /></svg>
        <svg width="24" height="24" viewBox="0 0 24 24"><path d="M2.500 22L14 9" stroke="#777" strokeWidth="4" strokeLinecap="round" /><path d="M3 21.500L14 9" stroke="#e5e5e5" strokeWidth="1.700" /><path d="M13 10q-2-5 2-8 3-2 5-1l-2 4 1.500 2 3.500-2q1 4-3 6-3 1-5 0z" fill="#c5c5c5" stroke="#777" /><path d="M19 21h5l-2.500 3z" fill="#000" /></svg>
      </PropTools>
      <ObjectLine>pushButton : QPushButton</ObjectLine>
      <TreeFrame $h={171} $mt={1}>
        <TreeMain>
          <TreeHead><TreeHeadCell $w={150}>Property</TreeHeadCell><TreeHeadCell $w={349}>Value</TreeHeadCell></TreeHead>
          <GroupRow><Chev />QWidget</GroupRow>
          <Prop name={<><Chev />font</>} indent={5} bold bg="#ffffdf"><b>A</b>[Segoe UI, 30]</Prop>
          <Prop name="Family" indent={43} bg="#ffffbf">Segoe UI</Prop>
          <Prop name="Point Size" indent={43} bold sel bg="#efeff0">30</Prop>
          <Prop name="Bold" indent={43} bg="#ffffbf"><CheckBox /></Prop>
          <Prop name="Italic" indent={43} bg="#ffffdf"><CheckBox /></Prop>
          <Prop name="Underline" indent={43} bg="#ffffbf"><CheckBox /></Prop>
          <Prop name="" indent={43} bg="#ffffdf"><CheckBox /></Prop>
        </TreeMain>
        <VScroll><Chev d="up" /><Thumb $h={79} /><Spacer /><Chev /></VScroll>
      </TreeFrame>

      <Dock title="Resource Browser" mt={6} />
      <ResTools>
        <svg width="24" height="24" viewBox="0 0 24 24" fill="none" stroke="#111" strokeWidth="1.600" strokeLinejoin="round"><path d="M11.500 10.500q-1-7 5-9l4 .5-4 4 .5 2 2 .5 4-3.500q1 4-2 7-2 2-6 1L6 22q-2 1.500-4-.5-1.500-2 0-3.500z" /></svg>
        <svg width="24" height="24" viewBox="0 0 24 24" fill="none" stroke="#111" strokeWidth="1.600"><path d="M15.500 2A10.500 10.500 0 113.500 5.500L9 1.500M3.500 1.500H9V7" /></svg>
        <Spacer />
        <Field $w="227px">Filter</Field>
      </ResTools>
      <ResPanes><ResPane $w="257px">&lt;resource root&gt;</ResPane><ResPane /></ResPanes>
      <Tabs><Tab $w={113}>Signal/Slot Editor</Tab><Tab $w={91}>Action Editor</Tab><Tab $w={118} $on>Resource Browser</Tab></Tabs>
    </RightDock>
  );
}

function SaveDialog() {
  return (
    <Dialog>
      <DlgTitle><Designer /><span>Save Form As</span><X c="#fff" w={1.1} /></DlgTitle>
      <DlgNav>
        <NavIcon $w={30}><Arrow c="#8a8a8a" /></NavIcon>
        <NavIcon $w={26}><Arrow d="right" c="#8a8a8a" /></NavIcon>
        <NavIcon $w={18}><Chev c="#777" s={8} /></NavIcon>
        <NavIcon $w={20}><Arrow d="up" c="#fff" /></NavIcon>
        <Address>
          <NavIcon $w={20}><svg width="14" height="17" viewBox="0 0 14 17"><path d="M0 1h12v11h2v5H2l-2-1z" fill="#f5d273" /><path d="M0 1h11v15H0z" fill="#fbe08d" /></svg></NavIcon>
          <Crumb $w={13}><svg width="8" height="8" viewBox="0 0 8 8"><path d="M4 1L1 4l3 3M7.500 1l-3 3 3 3" stroke="#9a9a9a" fill="none" strokeWidth="1.100" /></svg></Crumb>
          <Crumb $w={307} $ls="-0.3px">379__Criando_e_compilando_um_arquivo_UI_com_o_Qt...</Crumb>
          <Crumb $w={16}><Chev d="right" c="#999" s={8} w={1.5} /></Crumb>
          <Crumb $w={56}>ui</Crumb>
          <NavIcon $w={19}><Chev c="#888" s={10} /></NavIcon>
          <N s={12}><path d="M11 3.500A6 6 0 114 4M3 .5v4.500h5" stroke="#888" strokeWidth="1.900" /></N>
        </Address>
        <Search>Pesquisar em ui<N s={12}><circle cx="10" cy="6" r="4.700" stroke="#aaa" strokeWidth="1.800" /><path d="M6.500 9.500L1 15" stroke="#aaa" strokeWidth="2" /></N></Search>
      </DlgNav>
      <DlgTools>
        Organizar<MenuMark $l={5} $r={29}><Tri /></MenuMark>Nova pasta<Spacer />
        <svg width="17" height="13" viewBox="0 0 17 13"><path d="M0 0h5v13H0z" fill="#ddd" /><path d="M1.500 2h2M1.500 6.500h2M1.500 11h2" stroke="#444" strokeWidth="1.500" /><path d="M6.500 2.500h4M12 2.500h4M6.500 6.500h4M12 6.500h4M6.500 10.500h4M12 10.500h4" stroke="#777" /></svg>
        <MenuMark $l={8} $r={29}><Tri /></MenuMark>
        <svg width="17" height="17" viewBox="0 0 17 17"><circle cx="8.500" cy="8.500" r="8" fill="#0b6fd0" /><text x="8.500" y="13" fontSize="12.500" fontWeight="700" textAnchor="middle" letterSpacing="0" fill="#fff" fontFamily="Open Sans">?</text></svg>
      </DlgTools>
      <DlgBody>
        <NavPane>{navRows.map(([k, label, ls], i) => <NavRow key={k} $root={i === 0} $sel={i === 9} $ls={ls}>{NavI[k]}<span>{label}</span></NavRow>)}</NavPane>
        <NavScroll><Chev d="up" c="#777" /><i /><Chev c="#777" /></NavScroll>
        <Files>
          <FileHead><HeadCell $w={273} $l={18}>Nome</HeadCell><HeadCell $w={144} $l={6}>Data de modificação</HeadCell><HeadCell $w={120} $l={6}>Tipo</HeadCell><Chev d="up" c="#aaa" w={1} /></FileHead>
          <Empty>Nenhum item corresponde à pesquisa.</Empty>
          <HScroll><Chev d="left" c="#888" /><i /><Chev d="right" c="#888" /></HScroll>
        </Files>
      </DlgBody>
      <DlgForm>
        <FormLine><label>Nome:</label><Combo $focus><Selected>window.ui</Selected><Chev c="#bbb" w={1} /></Combo></FormLine>
        <FormLine><label>Tipo:</label><Combo>Designer UI files (*.ui)<Chev c="#bbb" w={1} /></Combo></FormLine>
      </DlgForm>
      <DlgFoot><Chev d="up" c="#ccc" /><span>Ocultar pastas</span><DlgButton $main>Salvar</DlgButton><DlgButton>Cancelar</DlgButton></DlgFoot>
      <DlgCorner><SizeGrip c="#bbb" /></DlgCorner>
    </Dialog>
  );
}

export default function App() {
  const menus = [['File', 34], ['Edit', 36], ['Form', 44], ['View', 41], ['Settings', 58], ['Window', 60], ['Help', 30]];
  return (
    <Screen>
      <Global />
      <TitleBar>
        <Designer /><TitleText>Qt Widgets Designer</TitleText>
        <CaptionButton><svg width="10" height="10"><path d="M0 5.500h10" stroke="#999" /></svg></CaptionButton>
        <CaptionButton><svg width="10" height="10" fill="none" stroke="#999"><path d="M.5 2.500h7v7h-7zM2.500 2.500v-2h7v7h-2" /></svg></CaptionButton>
        <CaptionButton><X /></CaptionButton>
      </TitleBar>
      <MenuBar>{menus.map(([m, w]) => <MenuItem key={m} $w={w}>{m}</MenuItem>)}</MenuBar>
      <ToolBar>
        <ToolGroup><Grip />{['new', 'open', 'save'].map(k => <ToolButton key={k}>{I[k]}</ToolButton>)}</ToolGroup>
        <ToolGroup><Grip />{['back', 'front'].map(k => <ToolButton key={k}>{I[k]}</ToolButton>)}</ToolGroup>
        <ToolGroup><Grip />{['edit', 'tag', 'buddy', 'taborder'].map((k, i) => <ToolButton key={k} $on={i === 0}>{I[k]}</ToolButton>)}</ToolGroup>
        <ToolGroup $last><Grip />
          <ToolButton><LayoutIcon kind="h" gray /></ToolButton><ToolButton><LayoutIcon kind="v" gray /></ToolButton>
          <ToolButton><SplitIcon /></ToolButton><ToolButton><SplitIcon v /></ToolButton>
          <ToolButton><LayoutIcon kind="g" gray /></ToolButton><ToolButton><LayoutIcon kind="f" gray /></ToolButton>
          <ToolButton>{I.breakl}</ToolButton><ToolButton>{I.adjust}</ToolButton>
        </ToolGroup>
      </ToolBar>
      <Work>
        <WidgetBox />
        <Mdi>
          <SubWindow>
            <SubTitle><QtIcon /><span>MainWindow - untitled.ui</span>
              <SubButton><svg width="12" height="5"><rect x=".5" y=".5" width="11" height="4" rx="1" fill="#fff" stroke="#555" /></svg></SubButton>
              <SubButton><svg width="12" height="10" viewBox="0 0 12 10"><path d="M2.500 1.500l7 7M9.500 1.500l-7 7" stroke="#555" strokeWidth="4" /><path d="M2.500 1.500l7 7M9.500 1.500l-7 7" stroke="#fff" strokeWidth="2" /></svg></SubButton>
            </SubTitle>
            <SubBody><div>Type Here</div></SubBody>
          </SubWindow>
        </Mdi>
        <Inspector />
      </Work>
      <Status />
      <Preview>
        <PreviewTitle>
          <Designer /><Spacer />
          <svg width="10" height="10"><path d="M0 5.500h10" stroke="#ddd" /></svg>
          <svg width="11" height="11"><rect x=".5" y=".5" width="10" height="10" fill="none" stroke="#888" /></svg>
          <X s={11} c="#888" />
        </PreviewTitle>
        <PreviewBody>
          <ResultLabel>ui</ResultLabel>
          <FormRow><NameLabel>Seu nome:</NameLabel><NameInput>Digite seu nome</NameInput><SendButton>Enviar</SendButton></FormRow>
          <Corner><SizeGrip c="#c0c0c0" /></Corner>
        </PreviewBody>
      </Preview>
      <SaveDialog />
      <TaskBar>
        <Task $w={48}>{T.win}</Task><Task $w={48}>{T.search}</Task><Task $w={50} $pr={2}>{T.view}</Task>
        {tasks.map(([k, st]) => <Task key={k} $run={st === 1} $active={st === 2}>{k === 'designer' ? <Designer s={20} /> : T[k]}</Task>)}
        <Clock>21:08<br />28/09/2025</Clock>
      </TaskBar>
    </Screen>
  );
}
